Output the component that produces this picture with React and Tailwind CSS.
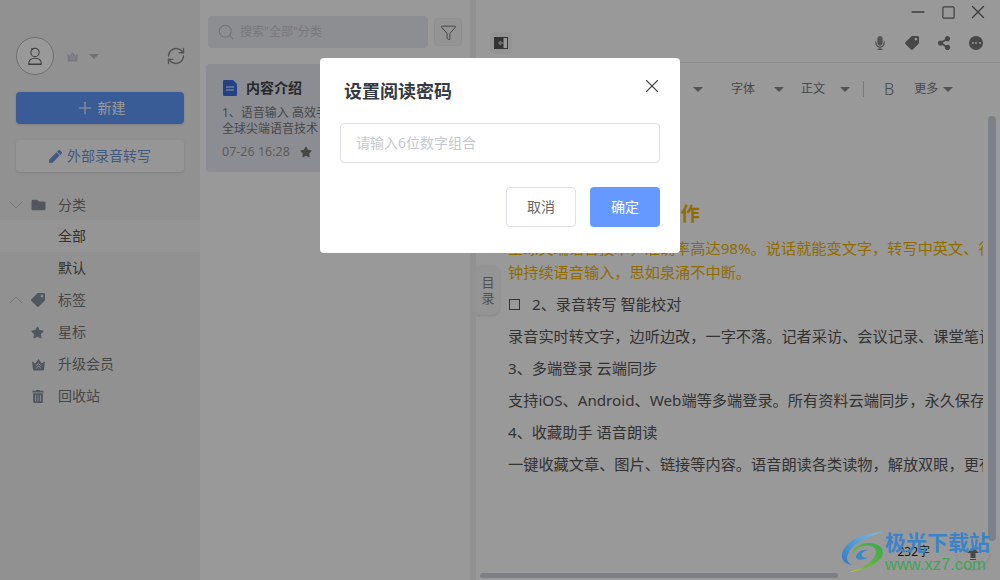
import React from "react";
import { FaPen, FaStar, FaTag, FaTrashAlt, FaFolder, FaMicrophone, FaShareAlt } from "react-icons/fa";
import { Search, Filter, ChevronDown, ChevronUp, Plus, X, RefreshCw, Minus, Square } from "lucide-react";

const font = { fontFamily: '"Noto Sans", "Noto Sans CJK SC", sans-serif' };

function Caret({ className = "" }) {
  return <span className={`inline-block w-0 h-0 border-x-[5px] border-x-transparent border-t-[5px] border-t-[#8a8a8a] ${className}`} />;
}

function Crown({ className = "", fill = "#777" }) {
  return (
    <svg viewBox="0 0 16 14" className={className}>
      <path d="M1 3.5 4.6 6 8 1l3.4 5L15 3.5 14 12a1.5 1.5 0 0 1-1.5 1.5h-9A1.5 1.5 0 0 1 2 12z" fill={fill} />
      <path d="M5.5 8.2 8 6l2.5 2.2M5.5 11 8 8.8l2.5 2.2" fill="none" stroke="#f2f2f2" strokeWidth="1" />
    </svg>
  );
}

function Sidebar() {
  const rows = [
    { label: "分类", arrow: "down", icon: <FaFolder className="w-[15px] h-[14px] text-[#87909e]" /> },
    { label: "全部", active: true },
    { label: "默认", sub: true },
    { label: "标签", arrow: "up", icon: <FaTag className="w-[14px] h-[14px] scale-x-[-1] text-[#87909e]" /> },
    { label: "星标", icon: <FaStar className="w-[13px] h-[13px] text-[#87909e]" /> },
    { label: "升级会员", icon: <Crown className="w-[15px] h-[13px]" fill="#87909e" /> },
    { label: "回收站", icon: <FaTrashAlt className="w-[12px] h-[13px] ml-[1px] text-[#87909e]" /> },
  ];
  return (
    <div className="w-[200px] h-full shrink-0 bg-[#f2f2f2] pt-[37px]">
      <div className="flex items-center h-[38px] px-4">
        <div className="w-[38px] h-[38px] rounded-full border border-[#bbb] bg-white flex items-center justify-center">
          <svg viewBox="0 0 20 22" className="w-[18px] h-[20px]" fill="none" stroke="#666" strokeWidth="1.2">
            <circle cx="10" cy="7" r="4.6" />
            <path d="M6 2.5 8 4" />
            <path d="M3 20c0-5 3-6.5 7-6.500s7 1.500 7 6.500zM3 20.500h14" />
          </svg>
        </div>
        <Crown className="w-[13px] h-[11px] ml-[12px]" fill="#c8ccd4" />
        <Caret className="ml-[10px] border-t-[#bcbcbc]!" />
        <RefreshCw className="w-[20px] h-[20px] ml-auto mr-[-2px] text-[#8a8a8a]" strokeWidth={1.7} />
      </div>

      <div className="mx-4 mt-[17px] h-8 rounded bg-[#6299fa] shadow-sm flex items-center justify-center gap-[3px] text-white text-sm">
        <Plus className="w-5 h-5" strokeWidth={1.3} />
        新建
      </div>
      <div className="mx-4 mt-4 h-8 rounded bg-[#fbfbfb] shadow-sm flex items-center justify-center gap-[5px] text-[#6f94d8] text-sm">
        <FaPen className="w-[13px] h-[13px]" />
        外部录音转写
      </div>

      <div className="mt-[15px]">
        {rows.map((r, i) => (
          <div key={r.label} className={`flex items-center text-sm ${i === 0 ? "h-[33px] pt-[2px]" : "h-8"} ${r.active ? "bg-white/50" : ""}`}>
            <span className="w-[31px] pl-1 shrink-0">
              {r.arrow === "down" && <ChevronDown className="w-6 h-6 text-[#c4c4c4]" strokeWidth={0.9} />}
              {r.arrow === "up" && <ChevronUp className="w-6 h-6 text-[#c4c4c4]" strokeWidth={0.9} />}
            </span>
            <span className="w-[27px] shrink-0">{r.icon}</span>
            <span className={r.active || r.sub ? "text-[#555]" : "text-[#777]"}>{r.label}</span>
          </div>
        ))}
      </div>
    </div>
  );
}

function NoteList() {
  return (
    <div className="w-[270px] h-full shrink-0 bg-white px-[6px] pt-4">
      <div className="flex items-center">
        <div className="ml-[2px] w-[220px] h-8 rounded bg-[#ebedf3] flex items-center pl-[9px] gap-[5px] text-xs text-[#c6c9d0]">
          <Search className="w-[18px] h-[18px] text-[#bcc0c8]" strokeWidth={1.4} />
          搜索"全部"分类
        </div>
        <div className="ml-[6px] w-7 h-7 rounded bg-[#f7f7f7] border border-[#eee] flex items-center justify-center">
          <Filter className="w-[17px] h-[17px] text-[#666]" strokeWidth={1.3} />
        </div>
      </div>
      <div className="mt-4 h-[108px] rounded bg-[#e9ecf5] pl-4 pt-[14px]">
        <div className="flex items-center gap-[9px]">
          <svg viewBox="0 0 14 16" className="ml-[1px] w-[14px] h-4">
            <path d="M0 1a1 1 0 0 1 1-1h9l4 4v11a1 1 0 0 1-1 1H1a1 1 0 0 1-1-1z" fill="#3d6fe0" />
            <path d="M3 7h8M3 10h8" stroke="#fff" strokeWidth="1.200" />
          </svg>
          <span className="text-sm font-bold text-[#444]">内容介绍</span>
        </div>
        <p className="mt-[7px] text-xs leading-4 text-[#777] whitespace-nowrap">1、语音输入 高效手写</p>
        <p className="text-xs leading-4 text-[#777] whitespace-nowrap">全球尖端语音技术</p>
        <div className="mt-[6px] flex items-center text-[12.5px] leading-[18px] text-[#999]">
          07-26 16:28
          <FaStar className="w-3 h-3 ml-[10px] text-[#777]" />
        </div>
      </div>
    </div>
  );
}

function Editor() {
  const line = "text-[15.2px] leading-8 text-[#555] whitespace-nowrap";
  const gold = "text-[15.2px] leading-6 text-[#f0b400] whitespace-nowrap";
  return (
    <div className="relative flex-1 h-full bg-white border-l-[6px] border-[#f2f2f2] overflow-hidden">
      <div className="h-6 flex items-center justify-end pr-[11px] text-[#666]">
        <Minus className="w-5 h-5" strokeWidth={1.9} />
        <Square className="ml-[13px] w-[15px] h-[15px]" strokeWidth={1.9} />
        <X className="ml-[11px] w-[22px] h-[22px]" strokeWidth={1.5} />
      </div>
      <div className="h-[39px] border-b border-[#e5e5e5] flex items-center pl-[14px] pr-[17px]">
        <div className="w-[22px] h-[22px] rounded bg-[#f7f7f7] flex items-center justify-center">
          <svg viewBox="0 0 14 12" className="w-[14px] h-3">
            <path d="M0 0h14v12H0z" fill="#555" />
            <path d="M9.500 1H13v10H9.500z" fill="#fff" />
            <path d="M5 6h5M7 4 5 6l2 2" stroke="#bbb" strokeWidth="1.500" fill="none" />
          </svg>
        </div>
        <div className="ml-auto flex items-center gap-[18px] text-[#8b8b8b]">
          <FaMicrophone className="w-[14px] h-[14px]" />
          <FaTag className="w-[14px] h-[14px] scale-x-[-1] text-[#777]" />
          <FaShareAlt className="w-[14px] h-[14px] text-[#777]" />
          <span className="w-[14px] h-[14px] rounded-full bg-[#777] flex items-center justify-center gap-[1.5px]">
            <i className="w-[2px] h-[2px] rounded-full bg-white" />
            <i className="w-[2px] h-[2px] rounded-full bg-white" />
            <i className="w-[2px] h-[2px] rounded-full bg-white" />
          </span>
        </div>
      </div>
      <div className="h-[50px] pt-[2px] flex items-center text-xs text-[#777] pl-[217px]">
        <Caret />
        <span className="ml-[28px]">字体</span>
        <Caret className="ml-[19px]" />
        <span className="ml-[17px]">正文</span>
        <Caret className="ml-[15px]" />
        <span className="ml-[13px] w-px h-4 bg-[#ccc]" />
        <span className="ml-[20px] text-base font-light text-[#777]">B</span>
        <span className="ml-[20px]">更多</span>
        <Caret className="ml-[5px]" />
      </div>

      <div className="ml-8 mr-[17px] overflow-hidden">
        <div className="mt-[85px] text-[19px] tracking-[0.5px] leading-8 font-bold text-[#f0b400] whitespace-nowrap">1、语音输入 高效创作</div>
        <div className={`${gold} mt-[6px]`}>全球尖端语音技术，准确率高达98%。说话就能变文字，转写中英文、行云流水。每分</div>
        <div className={gold}>钟持续语音输入，思如泉涌不中断。</div>
        <div className={`${line} mt-1 flex items-center gap-[12px]`}>
          <span className="ml-px w-[11px] h-[11px] border border-[#555]" />
          2、录音转写 智能校对
        </div>
        <div className={line}>录音实时转文字，边听边改，一字不落。记者采访、会议记录、课堂笔记</div>
        <div className={line}>3、多端登录 云端同步</div>
        <div className={line}>支持iOS、Android、Web端等多端登录。所有资料云端同步，永久保存</div>
        <div className={line}>4、收藏助手 语音朗读</div>
        <div className={line}>一键收藏文章、图片、链接等内容。语音朗读各类读物，解放双眼，更有</div>
      </div>

      <div className="absolute left-0 top-[265px] w-6 h-[50px] rounded-r-lg bg-[#f7f7f7] shadow-sm flex flex-col items-center justify-center text-[13px] leading-4 text-[#888]">
        <span>目</span>
        <span>录</span>
      </div>

      <div className="absolute right-1 top-[116px] w-2 h-[425px] rounded bg-[#d1d6e0]" />
      <div className="absolute left-1 bottom-[2px] w-[358px] h-[5px] rounded bg-[#d1d6e0]" />
      <div className="absolute right-[70px] bottom-[20px] text-xs leading-4 text-[#222]">232字</div>
      <div className="absolute right-[11px] bottom-[11px] w-8 h-8 rounded-full bg-white shadow-sm flex items-center justify-center">
        <svg viewBox="0 0 12 13" className="w-3 h-[13px]">
          <path d="M6 0 12 6H8.500v5h-5V6H0z" fill="#777" />
          <path d="M3 12.500h6" stroke="#777" />
        </svg>
      </div>
    </div>
  );
}

function Dialog() {
  return (
    <div className="absolute inset-0 bg-black/40 flex justify-center pt-[58px]">
      <div className="w-[360px] h-[195px] rounded bg-white px-5 relative">
        <div className="pl-1 pt-[21px] text-[18px] leading-6 font-bold text-[#333a45]">设置阅读密码</div>
        <X className="absolute right-[17px] top-[17px] w-[22px] h-[22px] text-[#444]" strokeWidth={1.2} />
        <div className="mt-[20px] h-10 rounded border border-[#dfe1ea] flex items-center pl-[15px] text-sm text-[#c5c8d0]">请输入6位数字组合</div>
        <div className="mt-6 flex justify-end gap-[14px]">
          <div className="w-[70px] h-10 rounded border border-[#dfe1ea] flex items-center justify-center text-sm text-[#666]">取消</div>
          <div className="w-[70px] h-10 rounded bg-[#6699ff] flex items-center justify-center text-sm text-white">确定</div>
        </div>
      </div>
    </div>
  );
}

function Watermark() {
  return (
    <div className="absolute left-[841px] top-[529px] flex">
      <svg viewBox="0 0 44 42" className="w-11 h-[42px] mt-[2px]">
        <defs>
          <linearGradient id="wmBlue" x1="1" y1="0" x2="0" y2="1">
            <stop offset="0" stopColor="#7cc0e6" />
            <stop offset="1" stopColor="#2f78c2" />
          </linearGradient>
          <linearGradient id="wmGreen" x1="1" y1="0" x2="0" y2="1">
            <stop offset="0" stopColor="#35a84e" />
            <stop offset="0.7" stopColor="#6cb83c" />
            <stop offset="1" stopColor="#e0d22c" />
          </linearGradient>
        </defs>
        <path d="M42 1C24 2 4 9 1 23c-1 6 3 10 10 11-5-3-6-6-4-11C11 13 27 5 42 1z" fill="url(#wmBlue)" />
        <path d="M12 24c2-7 10-11 18-9 7 2 6 8 2 13-5 6-13 10-24 13 12-1 25-6 32-14 5-8-1-15-12-15C19 12 9 18 12 24z" fill="url(#wmGreen)" />
        <path d="M15 26c0-4 6-8 12-7-4 1-7 3-6 6 1 2 4 2 7 1-4 3-13 4-13 0z" fill="#3f86c8" />
      </svg>
      <div>
        <div className="text-[21px] leading-[26px] font-bold text-[#3b83c9] whitespace-nowrap">极光下载站</div>
        <div className="mt-[-1px] text-[16.5px] leading-[20px] text-[#3fa557] whitespace-nowrap" style={{ fontFamily: '"Liberation Sans", sans-serif' }}>www.xz7.com</div>
      </div>
    </div>
  );
}

export default function App() {
  return (
    <div className="relative w-[1000px] h-[580px] overflow-hidden flex" style={font}>
      <Sidebar />
      <NoteList />
      <Editor />
      <Dialog />
      <Watermark />
    </div>
  );
}
